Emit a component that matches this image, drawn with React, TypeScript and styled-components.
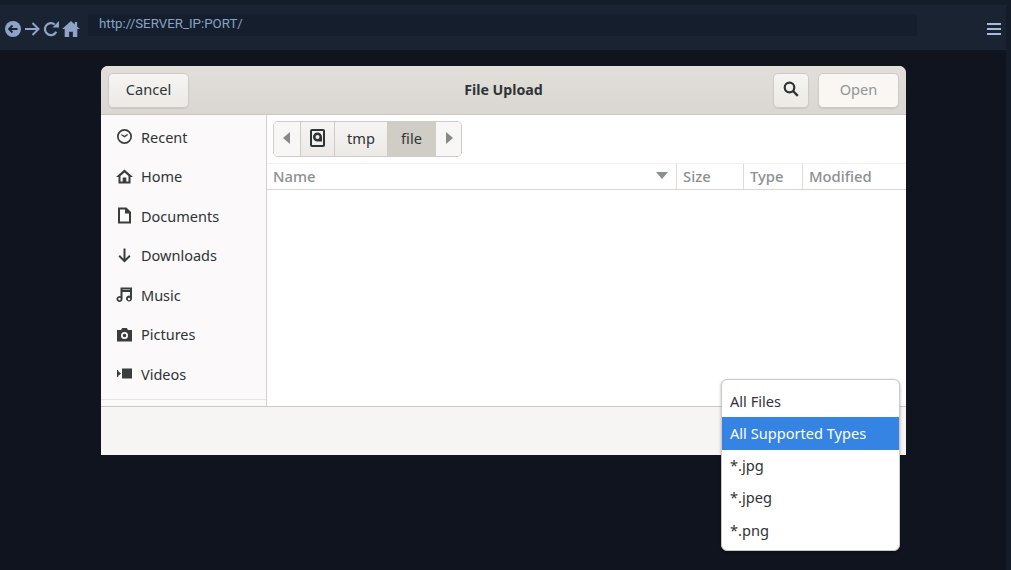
import React from "react";
import styled, { createGlobalStyle } from "styled-components";

const Global = createGlobalStyle`
  html, body { margin: 0; padding: 0; height: 570px; overflow: hidden; background: #0f141e; }
  * { box-sizing: border-box; }
`;
const Page = styled.div`
  width: 1011px; height: 570px; background: #0f141e; position: relative;
  font-family: "Noto Sans", "Open Sans", sans-serif; display: flex;
`;
const Viewport = styled.div`flex: 1; display: flex; flex-direction: column; min-width: 0;`;
const ScrollTrack = styled.div`width: 5px; background: #141c29;`;
const TopStrip = styled.div`height: 5px; background: #141c29;`;
const BrowserBar = styled.div`
  height: 45px; background: #1a2332; display: flex; align-items: center; padding: 0 0 0 5px;
`;
const NavIcons = styled.div`
  display: flex; align-items: center; width: 83px; height: 45px; padding-top: 3px; color: #8ea3c8;
  svg { flex: none; }
`;
const NavGap = styled.div<{ $w: number }>`width: ${p => p.$w}px; flex: none;`;
const UrlBox = styled.div`
  width: 829px; height: 22px; margin-top: -5px; background: #151e2c; border-radius: 3px; color: #87a3c4;
  font: 13.3px/20px Roboto, sans-serif; padding-left: 11px;
`;
const Burger = styled.div`
  margin-left: 70px; width: 14px; height: 12px; margin-top: 3px; display: flex; flex-direction: column; justify-content: space-between;
  span { display: block; height: 2px; background: #a9bad8; }
`;
const Content = styled.div`flex: 1; padding: 16px 0 0 101px; position: relative;`;
const Dialog = styled.div`
  width: 805px; height: 389px; border-radius: 7px 7px 0 0; overflow: hidden; display: flex; flex-direction: column;
  background: #f6f5f4;
`;
const Header = styled.div`
  height: 49px; background: linear-gradient(#e2dfdb, #dad6d1); border-bottom: 1px solid #cdc7c2;
  display: grid; grid-template-columns: 1fr auto 1fr; align-items: center; padding: 0 7px;
`;
const HeadSide = styled.div<{ $end?: boolean }>`display: flex; gap: 9px; justify-content: ${p => (p.$end ? "flex-end" : "flex-start")};`;
const Title = styled.div`
  font-size: 14.2px; font-weight: 700; color: #2e3436; margin-top: -2px;
`;
const HeadButton = styled.button<{ $w: number; $disabled?: boolean }>`
  width: ${p => p.$w}px; height: 35px; border-radius: 5px; border: 1px solid #cfcac4;
  background: ${p => (p.$disabled ? "#f9f6f4" : "linear-gradient(#f6f5f3, #ece9e6)")};
  color: ${p => (p.$disabled ? "#929595" : "#2e3436")};
  box-shadow: 0 1px 1px rgba(0,0,0,.08);
  font: 14.6px "Noto Sans", sans-serif; padding: 0 0 2px; display: flex; align-items: center; justify-content: center;
`;
const Main = styled.div`height: 292px; display: flex; background: #fff; border-bottom: 1px solid #cdc7c2;`;
const Sidebar = styled.div`
  width: 166px; background: #fbf9f9; border-right: 1px solid #d5d0cc; padding-top: 3px; display: flex; flex-direction: column;
`;
const PlaceRow = styled.div`
  height: 39.5px; display: flex; align-items: center; padding-left: 15px; gap: 8px; font-size: 14.5px; color: #2e3436; padding-bottom: 2px;
`;
const PlaceIcon = styled.svg`width: 17px; height: 17px; flex: none; fill: #3a3d3e;`;
const SideFoot = styled.div`margin-top: auto; height: 7px; border-top: 1px solid #e6e3e1;`;
const Files = styled.div`flex: 1; display: flex; flex-direction: column;`;
const PathRow = styled.div`height: 49px; padding: 6px 0 0 6px; border-bottom: 1px solid #f3f1ef;`;
const PathBar = styled.div`
  display: inline-flex; height: 36px; border: 1px solid #cfcac5; border-radius: 5px; overflow: hidden; background: #f8f6f4;
`;
const Crumb = styled.div<{ $w: number; $active?: boolean; $edge?: boolean }>`
  width: ${p => p.$w}px; display: flex; align-items: center; justify-content: center; font-size: 14.6px; color: #2e3436; padding-bottom: 3px;
  background: ${p => (p.$active ? "#d0cdc7" : p.$edge ? "#f9f7f5" : "linear-gradient(#f6f5f3, #ece9e6)")};
  border-right: 1px solid ${p => (p.$active ? "#d0cdc7" : "#cfcac5")};
  &:last-child { border-right: 0; }
`;
const ColHeader = styled.div`
  height: 26px; display: flex; border-bottom: 1px solid #d9d5d2; color: #8c8f90; font-size: 14.8px; font-weight: 500; background: #fff; padding-bottom: 0;
`;
const Col = styled.div<{ $w?: number }>`
  ${p => (p.$w ? `width: ${p.$w}px;` : "flex: 1;")}
  padding: 0 6px 2px; display: flex; align-items: center; justify-content: space-between; border-right: 1px solid #dedbd8;
  &:last-child { border-right: 0; }
`;
const SortArrow = styled.span`
  width: 0; height: 0; border-left: 6.5px solid transparent; border-right: 6.5px solid transparent; border-top: 7px solid #8c8f90; margin-right: 2px;
`;
const Footer = styled.div`flex: 1; background: #f6f5f4;`;
const Menu = styled.div`
  position: absolute; left: 721px; top: 329px; width: 179px; height: 172px; background: #fff; border: 1px solid #cdc9c5;
  border-radius: 6px; padding: 5px 0 4px; box-shadow: 0 1px 3px rgba(0,0,0,.3);
`;
const MenuItem = styled.div<{ $selected?: boolean }>`
  height: 32.25px; display: flex; align-items: center; padding: 0 0 1px 8px; font-size: 14.6px;
  color: ${p => (p.$selected ? "#fff" : "#2e3436")}; background: ${p => (p.$selected ? "#3584e4" : "transparent")};
`;

const places: [string, React.ReactNode][] = [
  ["Recent", <path fillRule="evenodd" d="M8.5 1a7.5 7.5 0 1 0 0 15 7.5 7.5 0 0 0 0-15zm0 1.7a5.800 5.800 0 1 1 0 11.600 5.800 5.800 0 0 1 0-11.600zM5 7.100l3.500 2.300L12 7l-.6-.9-2.900 1.600L5.600 6.200z" />],
  ["Home", <path fillRule="evenodd" d="M8.500 1.500 0 9h2.500v6.500h12V9H17zM4.500 13.500V8l4-3.600 4 3.600v5.500h-2.200V9.500H6.700v4z" />],
  ["Documents", <path fillRule="evenodd" d="M2 .5h8.500l4.500 4.500v11.500H2zm2 2v12h9V6.500H9V2.500z" />],
  ["Downloads", <path d="M7.500 1.500h2v10.200l3.600-3.600 1.400 1.400-6 6-6-6 1.400-1.400 3.600 3.600z" />],
  ["Music", <path fillRule="evenodd" d="M4.500 1.500H16v11a3 3 0 1 1-2-2.800V6H6.500v7a3 3 0 1 1-2-2.800zm2 2v.5H14v-.5zM3.500 11.800a1.200 1.200 0 1 0 0 2.400 1.200 1.200 0 0 0 0-2.400zm9.500 0a1.200 1.200 0 1 0 0 2.400 1.200 1.200 0 0 0 0-2.400z" />],
  ["Pictures", <path fillRule="evenodd" d="M1 4h4l1.200-2h4.600L12 4h4v11.500H1zm7.500 2a3.500 3.500 0 1 0 0 7 3.500 3.500 0 0 0 0-7zm0 1.700a1.800 1.800 0 1 1 0 3.600 1.800 1.800 0 0 1 0-3.600z" />],
  ["Videos", <path d="M6 3.500h10v10H6zM1.500 5.500 5 8.500l-3.500 3zM1 5h1.200v7H1z" />],
];

export default function App() {
  return (
    <Page>
      <Global />
      <Viewport>
        <TopStrip />
        <BrowserBar>
          <NavIcons>
            <svg width="16" height="16" viewBox="0 0 16 16">
              <circle cx="8" cy="8" r="8" fill="#8ea3c8" />
              <path d="M12.500 8H4.500M7.500 4.500 4 8l3.500 3.500" stroke="#1a2332" strokeWidth="1.800" fill="none" />
            </svg>
            <NavGap $w={4} />
            <svg width="15" height="14" viewBox="0 0 15 14">
              <path d="M0 7h13.500M7.500 1l6 6-6 6" stroke="#8ea3c8" strokeWidth="2" fill="none" />
            </svg>
            <NavGap $w={3} />
            <svg width="16" height="16" viewBox="0 0 16 16">
              <path d="M13.300 10.800A6 6 0 1 1 11.800 3.500" stroke="#8ea3c8" strokeWidth="2.200" fill="none" />
              <path d="M9.500 6.500H16V0z" fill="#8ea3c8" />
            </svg>
            <NavGap $w={3} />
            <svg width="18" height="16" viewBox="0 0 19 17">
              <path d="M9.500 0 0 8.500h2.800V17h4.700v-5.500h4V17h4.700V8.500H19l-3-2.700V1h-2.500v2.600z" fill="#8ea3c8" />
            </svg>
          </NavIcons>
          <UrlBox>http://SERVER_IP:PORT/</UrlBox>
          <Burger><span /><span /><span /></Burger>
        </BrowserBar>
        <Content>
          <Dialog>
            <Header>
              <HeadSide>
                <HeadButton $w={81}>Cancel</HeadButton>
              </HeadSide>
              <Title>File Upload</Title>
              <HeadSide $end>
                <HeadButton $w={36}>
                  <svg width="16" height="16" viewBox="0 0 16 16">
                    <circle cx="6.500" cy="6.500" r="4.800" stroke="#2e3436" strokeWidth="2.200" fill="none" />
                    <path d="m10 10 4.800 4.800" stroke="#2e3436" strokeWidth="2.400" />
                  </svg>
                </HeadButton>
                <HeadButton $w={81} $disabled>Open</HeadButton>
              </HeadSide>
            </Header>
            <Main>
              <Sidebar>
                {places.map(([label, icon]) => (
                  <PlaceRow key={label}>
                    <PlaceIcon viewBox="0 0 17 17">{icon}</PlaceIcon>
                    {label}
                  </PlaceRow>
                ))}
                <SideFoot />
              </Sidebar>
              <Files>
                <PathRow>
                  <PathBar>
                    <Crumb $w={27} $edge>
                      <svg width="8" height="12" viewBox="0 0 8 12"><path d="M7 0v12L0 6z" fill="#84898a" /></svg>
                    </Crumb>
                    <Crumb $w={34}>
                      <svg width="15" height="18" viewBox="0 0 15 18">
                        <path fillRule="evenodd" d="M2 0h11a2 2 0 0 1 2 2v14a2 2 0 0 1-2 2H2a2 2 0 0 1-2-2V2a2 2 0 0 1 2-2zm0 2v14h11V2zm5.500 1.500a4.500 4.500 0 0 1 4.500 4.500v4.500H7.500a4.500 4.500 0 0 1 0-9zm0 2.500a2 2 0 1 0 0 4 2 2 0 0 0 0-4z" fill="#2e3436" />
                      </svg>
                    </Crumb>
                    <Crumb $w={53}>tmp</Crumb>
                    <Crumb $w={48} $active>file</Crumb>
                    <Crumb $w={25} $edge>
                      <svg width="8" height="12" viewBox="0 0 8 12"><path d="M1 0v12l7-6z" fill="#84898a" /></svg>
                    </Crumb>
                  </PathBar>
                </PathRow>
                <ColHeader>
                  <Col $w={410}>Name<SortArrow /></Col>
                  <Col $w={67}>Size</Col>
                  <Col $w={59}>Type</Col>
                  <Col>Modified</Col>
                </ColHeader>
              </Files>
            </Main>
            <Footer />
          </Dialog>
          <Menu>
            <MenuItem>All Files</MenuItem>
            <MenuItem $selected>All Supported Types</MenuItem>
            <MenuItem>*.jpg</MenuItem>
            <MenuItem>*.jpeg</MenuItem>
            <MenuItem>*.png</MenuItem>
          </Menu>
        </Content>
      </Viewport>
      <ScrollTrack />
    </Page>
  );
}
